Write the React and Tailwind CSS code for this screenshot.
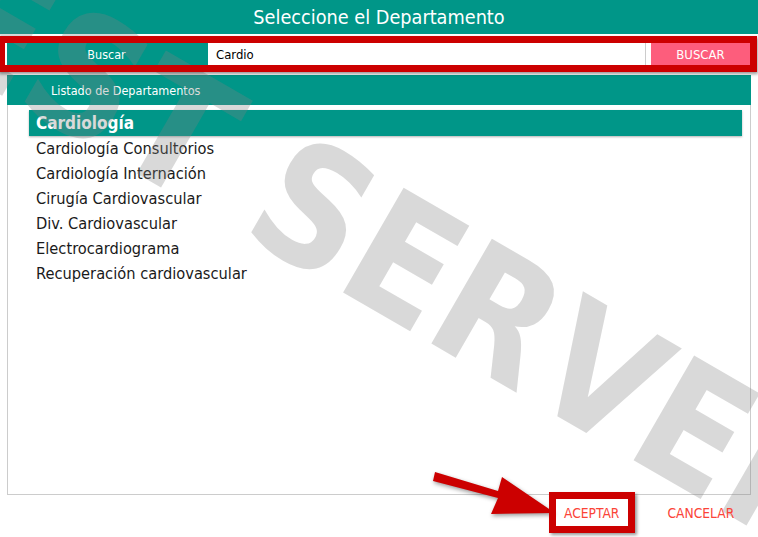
const departamentos = [
  "Cardiología Consultorios",
  "Cardiología Internación",
  "Cirugía Cardiovascular",
  "Div. Cardiovascular",
  "Electrocardiograma",
  "Recuperación cardiovascular",
];

export default function App() {
  return (
    <div className="relative w-[758px] h-[537px] overflow-hidden bg-white font-['DejaVu_Sans',sans-serif] font-stretch-condensed text-[#1a1a1a]">
      <div className="h-[34px] bg-[#009688] text-white text-center text-[19.7px] leading-[35px]">
        Seleccione el Departamento
      </div>

      {/* Barra de busqueda */}
      <div className="mt-[9px] mx-[7px] h-[22px] flex text-[13px] leading-[24px]">
        <div className="w-[201px] pr-[2px] bg-[#009688] text-white text-center text-[12.5px]">Buscar</div>
        <div className="flex-1 pl-[8px] border-r border-[#ccc] bg-white text-black mr-[5px]">Cardio</div>
        <div className="w-[99px] mr-[1px] bg-[#fd5d7c] text-white text-center">BUSCAR</div>
      </div>

      <div className="relative mt-[10px] mx-[7px] h-[420px] border-x border-b border-[#ccc]">
        <div className="-mx-px h-[30px] bg-[#009688] text-white text-[12.5px] leading-[31px] pl-[44px]">
          Listado de Departamentos
        </div>
        <div className="mt-[5px] ml-[21px] mr-[8px] text-[16.3px] leading-[25px]">
          <div className="h-[26px] -mb-px pl-[7px] bg-[#009688] text-white text-[17px] leading-[27px] font-bold shadow-[0_1px_2px_rgba(0,0,0,0.3)]">
            Cardiología
          </div>
          <div className="pt-px">
            {departamentos.map((d) => (
              <div key={d} className="pl-[7px]">{d}</div>
            ))}
          </div>
        </div>
      </div>

      {/* Marca de agua */}
      <div className="absolute left-[-95px] top-[-122px] origin-top-left rotate-[30deg] whitespace-nowrap font-bold text-[166px] leading-none text-[rgba(128,128,128,0.3)] pointer-events-none">
        TEST SE<span className="tracking-[3px]">R</span>VER
      </div>

      <div className="relative mt-[8px] flex text-[13.7px] text-[#fb4438]">
        <span className="ml-[564px]">ACEPTAR</span>
        <span className="ml-[48px]">CANCELAR</span>
      </div>

      {/* Anotaciones */}
      <svg className="absolute left-[430px] top-[470px] drop-shadow-[1px_2px_2px_rgba(0,0,0,0.4)]" width="130" height="50" viewBox="0 0 130 50">
        <path d="M5 2 L3 11 L68 28 L61 44 L125 43 L72 7 L68 21 Z" fill="#cc0000" />
      </svg>
      <div className="absolute left-[-2px] top-[36px] w-[759px] h-[36px] border-[7px] border-[#cc0000] shadow-[1px_2px_3px_rgba(0,0,0,0.4)]" />
      <div className="absolute left-[549px] top-[492px] w-[86px] h-[41px] border-[7px] border-[#cc0000] shadow-[2px_2px_3px_rgba(0,0,0,0.4)]" />
    </div>
  );
}
